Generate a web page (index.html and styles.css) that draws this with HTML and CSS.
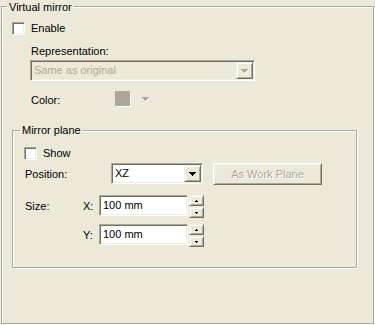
FILE: index.html
```html
<!DOCTYPE html>
<html lang="en">
<head>
  <meta charset="UTF-8" />
  <title>Virtual mirror</title>
  <link rel="stylesheet" href="styles.css">
</head>
<body>
  <div class="group group-outer">
    <span class="caption">Virtual mirror</span>

    <label class="check-row"><span class="checkbox"></span>Enable</label>

    <div class="field-label">Representation:</div>
    <div class="combo combo-wide disabled">
      <span class="combo-text">Same as original</span>
      <span class="combo-btn">
        <svg width="7" height="4" viewBox="0 0 7 4" shape-rendering="crispEdges">
          <rect x="0" y="0" width="7" height="1"/><rect x="1" y="1" width="5" height="1"/>
          <rect x="2" y="2" width="3" height="1"/><rect x="3" y="3" width="1" height="1"/>
        </svg>
      </span>
    </div>

    <div class="color-row">
      <span class="color-label">Color:</span>
      <span class="swatch"></span>
      <svg class="swatch-arrow" width="7" height="4" viewBox="0 0 7 4" shape-rendering="crispEdges">
        <rect x="0" y="0" width="7" height="1"/><rect x="1" y="1" width="5" height="1"/>
        <rect x="2" y="2" width="3" height="1"/><rect x="3" y="3" width="1" height="1"/>
      </svg>
    </div>

    <div class="group group-inner">
      <span class="caption">Mirror plane</span>

      <label class="check-row"><span class="checkbox"></span>Show</label>

      <div class="pos-row">
        <span class="row-label">Position:</span>
        <div class="combo combo-small">
          <span class="combo-text">XZ</span>
          <span class="combo-btn">
            <svg width="7" height="4" viewBox="0 0 7 4" shape-rendering="crispEdges">
              <rect x="0" y="0" width="7" height="1"/><rect x="1" y="1" width="5" height="1"/>
              <rect x="2" y="2" width="3" height="1"/><rect x="3" y="3" width="1" height="1"/>
            </svg>
          </span>
        </div>
        <button class="btn" disabled>As Work Plane</button>
      </div>

      <div class="size-row">
        <span class="size-label">Size:</span>
        <span class="axis-label">X:</span>
        <span class="edit">100 mm</span>
        <span class="spin">
          <span class="spin-btn"><svg width="3" height="2" viewBox="0 0 3 2" shape-rendering="crispEdges"><rect x="1" y="0" width="1" height="1"/><rect x="0" y="1" width="3" height="1"/></svg></span>
          <span class="spin-btn"><svg width="3" height="2" viewBox="0 0 3 2" shape-rendering="crispEdges"><rect x="0" y="0" width="3" height="1"/><rect x="1" y="1" width="1" height="1"/></svg></span>
        </span>
      </div>

      <div class="size-row second">
        <span class="size-label"></span>
        <span class="axis-label">Y:</span>
        <span class="edit">100 mm</span>
        <span class="spin">
          <span class="spin-btn"><svg width="3" height="2" viewBox="0 0 3 2" shape-rendering="crispEdges"><rect x="1" y="0" width="1" height="1"/><rect x="0" y="1" width="3" height="1"/></svg></span>
          <span class="spin-btn"><svg width="3" height="2" viewBox="0 0 3 2" shape-rendering="crispEdges"><rect x="0" y="0" width="3" height="1"/><rect x="1" y="1" width="1" height="1"/></svg></span>
        </span>
      </div>
    </div>
  </div>
</body>
</html>
```

FILE: styles.css
```css
* {
  box-sizing: border-box;
}

body {
  margin: 0;
  width: 375px;
  height: 325px;
  overflow: hidden;
  background: #ece9d8;
  font-family: "Liberation Sans", Arial, sans-serif;
  font-size: 11px;
  line-height: 13px;
  color: #000;
}

/* etched group boxes */
.group {
  position: relative;
  border: 1px solid #aca899;
  box-shadow: inset 1px 1px #fff, 1px 1px #fff;
}

.group-outer {
  margin: 6px 0 0 1px;
  width: 373px;
  height: 318px;
  padding: 15px 10px 0;
}

.group-inner {
  margin-top: 23px;
  width: 345px;
  height: 138px;
  padding: 16px 11px 0;
}

.caption {
  position: absolute;
  top: -7px;
  left: 7px;
  padding: 0 2px;
  height: 13px;
  background: #ece9d8;
}

.group-outer > .caption {
  top: -6px;
  left: 5px;
}

/* checkbox */
.check-row {
  display: flex;
  align-items: center;
  height: 13px;
}

.checkbox {
  width: 13px;
  height: 13px;
  margin-right: 6px;
  background: #fff;
  border: 1px solid;
  border-color: #aca899 #fff #fff #aca899;
  box-shadow: inset 1px 1px #716f64, inset -1px -1px #f1efe2;
}

.field-label {
  margin: 10px 0 0 19px;
}

/* combo box */
.combo {
  display: flex;
  align-items: center;
  height: 21px;
  background: #fff;
  border: 1px solid;
  border-color: #aca899 #fff #fff #aca899;
  box-shadow: inset 1px 1px #716f64, inset -1px -1px #f1efe2;
  padding: 1px;
}

.combo-text {
  flex: 1;
  padding-left: 2px;
}

.combo-btn {
  width: 17px;
  height: 17px;
  display: flex;
  align-items: center;
  justify-content: center;
  background: #ece9d8;
  border: 1px solid;
  border-color: #f1efe2 #716f64 #716f64 #f1efe2;
  box-shadow: inset 1px 1px #fff, inset -1px -1px #aca899;
}

.combo-btn svg {
  fill: #000;
  margin-top: 1px;
}

.combo-wide {
  margin: 2px 0 0 18px;
  width: 225px;
}

.combo.disabled {
  background: #ece9d8;
  color: #aca899;
}

.combo.disabled .combo-btn svg {
  fill: #aca899;
  filter: drop-shadow(1px 1px 0 #fff);
}

/* colour picker */
.color-row {
  display: flex;
  align-items: flex-start;
  margin-top: 10px;
  padding-left: 19px;
}

.color-label {
  width: 84px;
  margin-top: 3px;
}

.swatch {
  width: 15px;
  height: 15px;
  background: #aca899;
  box-shadow: 1px 1px #fff;
}

.swatch-arrow {
  margin: 6px 0 0 12px;
  fill: #aca899;
  filter: drop-shadow(1px 1px 0 #fff);
}

/* mirror plane rows */
.pos-row {
  display: flex;
  align-items: flex-start;
  margin-top: 3px;
}

.row-label {
  width: 86px;
  margin-left: 1px;
  padding-top: 5px;
}

.combo-small {
  width: 92px;
}

.btn {
  margin-left: 10px;
  width: 109px;
  height: 22px;
  padding: 0;
  font: inherit;
  color: #aca899;
  text-shadow: 1px 1px #fff;
  background: #ece9d8;
  border: 1px solid;
  border-color: #fff #716f64 #716f64 #fff;
  box-shadow: inset 1px 1px #f1efe2, inset -1px -1px #aca899;
}

.size-row {
  display: flex;
  align-items: flex-start;
  margin-top: 10px;
}

.size-row.second {
  margin-top: 6px;
}

.size-label {
  width: 58px;
  margin-left: 1px;
  padding-top: 5px;
}

.axis-label {
  width: 16px;
  padding-top: 5px;
}

.edit {
  display: flex;
  align-items: center;
  width: 89px;
  height: 21px;
  padding-left: 3px;
  background: #fff;
  border: 1px solid;
  border-color: #aca899 #fff #fff #aca899;
  box-shadow: inset 1px 1px #716f64, inset -1px -1px #f1efe2;
}

.spin {
  display: flex;
  flex-direction: column;
  gap: 1px;
  margin-left: 1px;
}

.spin-btn {
  display: flex;
  align-items: center;
  justify-content: center;
  width: 15px;
  height: 11px;
  background: #ece9d8;
  border: 1px solid;
  border-color: #f1efe2 #716f64 #716f64 #f1efe2;
  box-shadow: inset 1px 1px #fff, inset -1px -1px #aca899;
}

.spin-btn svg {
  fill: #000;
}
```
